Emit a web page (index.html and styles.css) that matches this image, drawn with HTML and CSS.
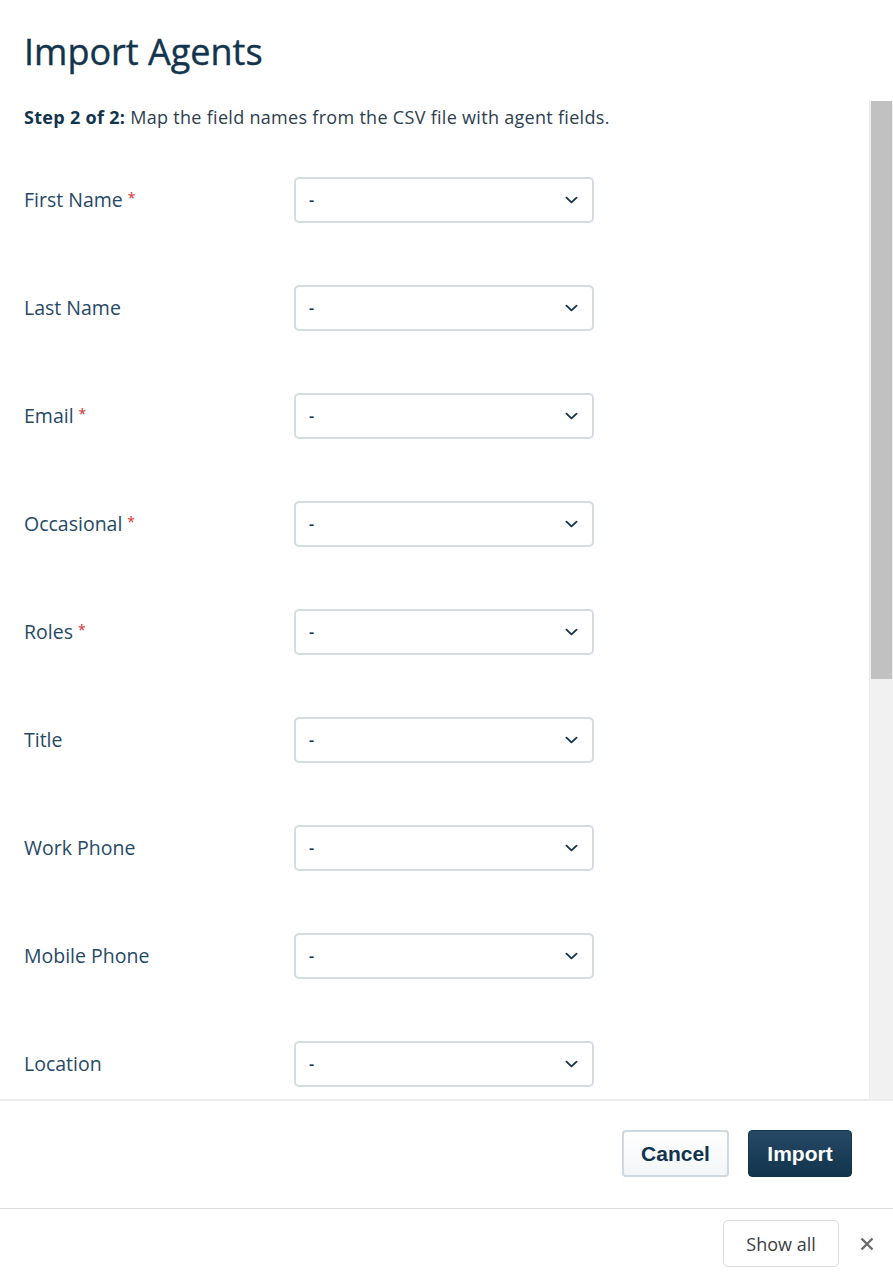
FILE: index.html
```html
<!DOCTYPE html>
<html>
<head>
<meta charset="utf-8">
<link rel="stylesheet" href="styles.css">
</head>
<body>
<div class="modal">
  <header class="modal-header">
    <h1 class="title">Import Agents</h1>
  </header>
  <div class="body-wrap">
    <div class="scroll-content">
      <p class="step"><strong>Step 2 of 2:</strong> Map the field names from the CSV file with agent fields.</p>
      <div class="fields">
        <div class="field"><label class="label">First Name<span class="req">*</span></label><div class="select"><span>-</span><svg class="chev" viewBox="0 0 14 8"><path d="M1.5 1.5 L7 6.5 L12.5 1.5"/></svg></div></div>
        <div class="field"><label class="label">Last Name</label><div class="select"><span>-</span><svg class="chev" viewBox="0 0 14 8"><path d="M1.5 1.5 L7 6.5 L12.5 1.5"/></svg></div></div>
        <div class="field"><label class="label">Email<span class="req">*</span></label><div class="select"><span>-</span><svg class="chev" viewBox="0 0 14 8"><path d="M1.5 1.5 L7 6.5 L12.5 1.5"/></svg></div></div>
        <div class="field"><label class="label">Occasional<span class="req">*</span></label><div class="select"><span>-</span><svg class="chev" viewBox="0 0 14 8"><path d="M1.5 1.5 L7 6.5 L12.5 1.5"/></svg></div></div>
        <div class="field"><label class="label">Roles<span class="req">*</span></label><div class="select"><span>-</span><svg class="chev" viewBox="0 0 14 8"><path d="M1.5 1.5 L7 6.5 L12.5 1.5"/></svg></div></div>
        <div class="field"><label class="label">Title</label><div class="select"><span>-</span><svg class="chev" viewBox="0 0 14 8"><path d="M1.5 1.5 L7 6.5 L12.5 1.5"/></svg></div></div>
        <div class="field"><label class="label">Work Phone</label><div class="select"><span>-</span><svg class="chev" viewBox="0 0 14 8"><path d="M1.5 1.5 L7 6.5 L12.5 1.5"/></svg></div></div>
        <div class="field"><label class="label">Mobile Phone</label><div class="select"><span>-</span><svg class="chev" viewBox="0 0 14 8"><path d="M1.5 1.5 L7 6.5 L12.5 1.5"/></svg></div></div>
        <div class="field"><label class="label">Location</label><div class="select"><span>-</span><svg class="chev" viewBox="0 0 14 8"><path d="M1.5 1.5 L7 6.5 L12.5 1.5"/></svg></div></div>
      </div>
    </div>
    <div class="scrollbar"><div class="thumb"></div></div>
  </div>
  <footer class="modal-footer">
    <button class="btn btn-secondary">Cancel</button>
    <button class="btn btn-primary">Import</button>
  </footer>
</div>
<div class="download-bar">
  <button class="show-all">Show all</button>
  <svg class="close" viewBox="0 0 14 14"><path d="M1.5 1.5 L12.5 12.5 M12.5 1.5 L1.5 12.5"/></svg>
</div>
</body>
</html>
```
FILE: styles.css
```css
* { box-sizing: border-box; }
html, body { margin: 0; padding: 0; background: #fff; }
body {
  width: 893px;
  height: 1273px;
  overflow: hidden;
  font-family: "Segoe UI", "Open Sans", "Noto Sans", sans-serif;
  color: #12344d;
}
.modal { display: flex; flex-direction: column; height: 1208px; }
.modal-header { height: 101px; padding: 29px 24px 0; }
.title {
  margin: 0;
  font-size: 36px;
  font-weight: 400;
  line-height: 46px;
  color: #12344d;
  -webkit-text-stroke: 0.4px #12344d;
}
.body-wrap {
  display: flex;
  height: 998px;
  overflow: hidden;
}
.scroll-content { flex: 1; padding: 4px 24px 0; overflow: hidden; }
.step {
  margin: 0;
  font-size: 18px;
  letter-spacing: 0.3px;
  line-height: 24px;
  color: #2c3e50;
}
.step strong { color: #12344d; font-weight: 700; }
.fields { display: flex; flex-direction: column; gap: 62px; margin-top: 48px; }
.field { display: flex; align-items: center; height: 46px; }
.label {
  width: 270px;
  font-size: 19.5px;
  line-height: 26px;
  color: #264966;
  display: flex;
  align-items: center;
}
.req { color: #d72d30; font-size: 14px; margin-left: 5px; line-height: 14px; margin-top: -4px; }
.select {
  width: 300px;
  height: 46px;
  border: 2px solid #d3dbe3;
  border-radius: 5px;
  display: flex;
  align-items: center;
  justify-content: space-between;
  padding: 0 14px 0 13px;
  font-size: 16px;
  font-weight: 600;
  color: #12344d;
  background: #fff;
}
.chev { width: 13px; height: 8px; fill: none; stroke: #12344d; stroke-width: 2; stroke-linecap: round; stroke-linejoin: round; }
.scrollbar {
  width: 24px;
  background: #f1f1f1;
  border-left: 1px solid #e9e9e9;
  padding: 0 1px 0 1px;
}
.thumb { height: 578px; background: #c1c1c1; }
.modal-footer {
  height: 109px;
  border-top: 2px solid #ececec;
  display: flex;
  justify-content: flex-end;
  align-items: flex-start;
  padding: 29px 41px 0 0;
  gap: 19px;
}
.btn {
  height: 47px;
  font-family: "Liberation Sans", Arial, sans-serif;
  font-weight: 700;
  font-size: 21px;
  border-radius: 4px;
  cursor: pointer;
  padding: 0;
}
.btn-secondary {
  width: 107px;
  border: 2px solid #cfd7df;
  background: linear-gradient(#ffffff, #f3f5f7);
  color: #12344d;
}
.btn-primary {
  width: 104px;
  border: 1px solid #12344d;
  background: linear-gradient(#264966, #12344d);
  color: #fff;
}
.download-bar {
  height: 65px;
  border-top: 1px solid #dadce0;
  display: flex;
  justify-content: flex-end;
  align-items: flex-start;
  padding: 11px 19px 0 0;
  gap: 21px;
}
.show-all {
  width: 116px;
  height: 47px;
  background: #fff;
  border: 1px solid #dadce0;
  border-radius: 5px;
  font-family: "Segoe UI", "Open Sans", sans-serif;
  font-size: 18px;
  color: #3c4043;
  padding: 0;
}
.close { width: 14px; height: 14px; margin-top: 17px; stroke: #6b6b6b; stroke-width: 2.4; fill: none; }
```
